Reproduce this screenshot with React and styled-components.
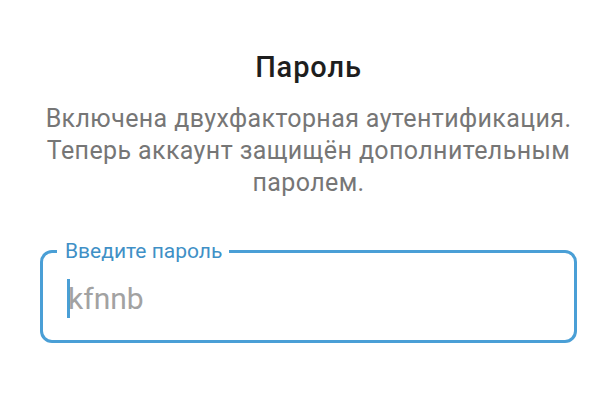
import React from "react";
import styled, { createGlobalStyle } from "styled-components";

const Global = createGlobalStyle`
  html, body { margin: 0; padding: 0; background: #ffffff; }
  body { font-family: Roboto, "Noto Sans", "Liberation Sans", sans-serif; }
`;

const Page = styled.div`
  width: 613px;
  height: 410px;
  box-sizing: border-box;
  padding: 49px 36px 0 40px;
  display: flex;
  flex-direction: column;
  align-items: stretch;
  background: #fff;
`;

const Title = styled.h1`
  margin: 0;
  font-size: 29px;
  line-height: 36px;
  font-weight: 500;
  letter-spacing: 0.9px;
  color: #1e1e1e;
  text-align: center;
`;

const Description = styled.p`
  margin: 17.8px 0 0;
  font-size: 25px;
  line-height: 32px;
  font-weight: 400;
  letter-spacing: 0.39px;
  color: #767676;
  text-align: center;
`;

const Field = styled.div`
  position: relative;
  margin-top: 51.2px;
  height: 93px;
  box-sizing: border-box;
  border: 3px solid #4a9fd6;
  border-radius: 12px;
  padding: 26px 0 0 24px;
`;

const Label = styled.span`
  position: absolute;
  top: -14px;
  left: 14px;
  padding: 0 7px 0 8px;
  background: #fff;
  font-size: 21px;
  line-height: 24px;
  color: #3f90c6;
`;

const Value = styled.div`
  display: flex;
  align-items: center;
  height: 40px;
  font-size: 30px;
  line-height: 40px;
  color: #a2a2a2;
`;

const Caret = styled.span`
  display: inline-block;
  width: 3px;
  height: 39px;
  background: #4a9fd6;
  margin-right: -2px;
  flex: none;
`;

export default function App() {
  return (
    <>
      <Global />
      <Page>
        <Title>Пароль</Title>
        <Description>
          Включена двухфакторная аутентификация.
          <br />
          Теперь аккаунт защищён дополнительным
          <br />
          паролем.
        </Description>
        <Field>
          <Label>Введите пароль</Label>
          <Value>
            <Caret />
            <span>kfnnb</span>
          </Value>
        </Field>
      </Page>
    </>
  );
}
